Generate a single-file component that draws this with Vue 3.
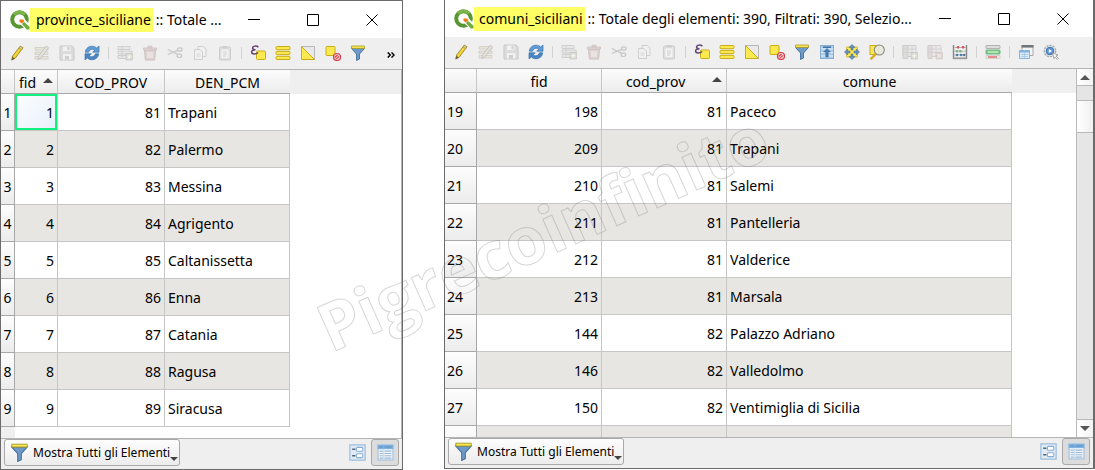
<script setup>
const dim = (s) => `<g opacity=".45">${s}</g>`
const yellowBox = 'fill="#fce94f" stroke="#c9ad18"'

const funnel =
  '<path d="M1.5 3.5 6.5 9v6.5l3-1.5V9l5-5.5z" fill="#6d9ac9" stroke="#436d9c" stroke-width=".9"/><path d="M1.5 1h13v2.4h-13z" fill="#fce94f" stroke="#a89a2c" stroke-width=".8"/>'

const icons = {
  pencil:
    '<path d="M11.3 1.2 14 2.800 6.200 13.200 2.800 15 3.600 11z" fill="#f0d438" stroke="#9c8526" stroke-width=".9"/><path d="m11.3 1.2 2.700 1.600-1.300 1.900-2.700-1.800z" fill="#d9d0a0" stroke="#9c8526" stroke-width=".6"/><path d="m3.400 11.700-.9 3.700 3.300-2z" fill="#675c3c"/>',
  multiedit: dim(
    '<path d="M1 2.5h13v2.6H1zM1 7h13v2.6H1zM1 11.5h13v2.6H1z" fill="#ddd7bb" stroke="#aaa596" stroke-width=".8"/><path d="m12.3 1 2.2 1.8-7.6 10-3 1.9.7-3.5z" fill="#d8d1c5" stroke="#888" stroke-width=".8"/>'
  ),
  save: dim(
    '<path d="M1 1h12l2 2v12H1z" fill="#c4c4c4" stroke="#9b9b9b"/><path d="M4 1.5h7.5V6H4zM4 9h8.5v5.5H4z" fill="#f4f4f4"/><path d="M8.5 2h2v3h-2zM6 11h4v3.5H6z" fill="#aaa"/>'
  ),
  reload:
    '<path d="M1.3 7.2C1.6 3.3 4.8 1.2 8 1.2c2 0 3.5.7 4.7 1.9L15 1v6.2H8.7l2-2.1C8.6 3.4 5.500 4.300 4.600 7.200z" fill="#5f9bd4" stroke="#3c74ad" stroke-width=".7"/><path d="M14.7 8.8c-.3 3.9-3.5 6-6.7 6-2 0-3.5-.7-4.7-1.9L1 15V8.8h6.3l-2 2.100c2.100 1.700 5.200.8 6.100-2.100z" fill="#4a86c2" stroke="#3c74ad" stroke-width=".7"/>',
  addrow: dim(
    '<path d="M1 1.5h12v3H1zM1 6h14v3H1zM1 10.5h9v3H1z" fill="#dedede" stroke="#a5a5a5" stroke-width=".9"/><path d="M5 1.5v12" stroke="#aaa"/><path d="M9 8.5h6.5V15H9z" fill="#bfbba8" stroke="#918e80" stroke-width=".6"/><path d="M12.2 9.3v5M9.7 11.8h5M10.5 10.1l3.5 3.5M14 10.1l-3.5 3.5" stroke="#fff" stroke-width=".8"/>'
  ),
  trash: dim(
    '<path d="M2.5 5h11l-.9 10H3.4z" fill="#cdb1b1" stroke="#a58a8a"/><path d="M1.5 3h13v2h-13zM6 1.2h4V3H6z" fill="#d6baba" stroke="#a58a8a" stroke-width=".8"/><path d="M6 7v6M8 7v6M10 7v6" stroke="#fff" stroke-width=".9"/>'
  ),
  cut: dim(
    '<path d="m.8 4.500 10 4.800M.8 9.500l10-4.200" fill="none" stroke="#999" stroke-width="1.300"/><ellipse cx="12.800" cy="4.500" rx="2.300" ry="1.700" fill="none" stroke="#999" stroke-width="1.200"/><ellipse cx="12.400" cy="10.800" rx="2.300" ry="1.700" fill="none" stroke="#999" stroke-width="1.200"/>'
  ),
  copy: dim(
    '<path d="M6 1.5h5.500L14 4v7.500H6z" fill="#f3f3f3" stroke="#aaa"/><path d="M2.500 4.500H8L10.500 7v7.500h-8z" fill="#f3f3f3" stroke="#aaa"/><path d="M4.500 9h4M4.500 11h4" stroke="#bbb"/>'
  ),
  paste: dim(
    '<rect x="2.500" y="2" width="11" height="13" rx="1" fill="#ccc" stroke="#a5a5a5"/><path d="M4.500 4.500h7v8.500h-7z" fill="#fafafa"/><path d="M5.500 1h5v2.500h-5z" fill="#aaa"/><path d="M6 7h4M6 9h4M6 11h3" stroke="#aaa"/>'
  ),
  expression:
    `<rect x="6.500" y="6" width="9" height="8.500" rx="1" ${yellowBox}/><path d="M8.400 2.300C6.500.3 2.500.9 2.600 3.100c0 1.300 1.300 1.700 2.900 1.700-2.300 0-3.900.7-3.900 2.300 0 2.500 4.600 2.500 6.500.4" fill="none" stroke="#654573" stroke-width="1.500"/>`,
  selectall:
    `<rect x="1" y="1.500" width="14" height="3.200" rx="1" ${yellowBox}/><rect x="1" y="6.400" width="14" height="3.200" rx="1" ${yellowBox}/><rect x="1" y="11.300" width="14" height="3.200" rx="1" ${yellowBox}/>`,
  invert:
    '<path d="M1.500 1.500h13v13z" fill="#e9e9e9" stroke="#b7b7b7"/><path d="M1.500 1.500v13h13z" fill="#fce94f" stroke="#c9ad18"/>',
  deselect:
    `<rect x="1" y="1.500" width="9" height="9" rx="1" ${yellowBox}/><circle cx="12" cy="12" r="3.500" fill="#f8d6d6" stroke="#d43c48" stroke-width="1.200"/><path d="m9.600 12.500 3-2.500m-2 4.300 3.500-3" stroke="#d43c48" stroke-width="1.100"/>`,
  funnel,
  movetop:
    '<rect x="1.500" y="1.500" width="13" height="13" fill="#a9cbe9" stroke="#86aed3"/><path d="M2 5h12M2 8.500h12M2 12h12" stroke="#e6f0fa"/><path d="M4 3.200h8" stroke="#36679a" stroke-width="1.400"/><path d="m8 4.500 3.500 3.500H9.200v5H6.800V8H4.500z" fill="#4b7eaf" stroke="#31618f" stroke-width=".5"/>',
  pan:
    '<path d="M2.500 3h11v10h-11z" fill="#fce94f" stroke="#c9ad18" stroke-width=".7"/><path d="M8 .5 11 3.500H9V6H7V3.500H5zM8 15.500l3-3H9V10H7v2.500H5zM.5 8l3-3v2H6v2H3.500v2zM15.500 8l-3-3v2H10v2h2.500v2z" fill="#6a90ba" stroke="#47709b" stroke-width=".6"/>',
  zoom:
    `<rect x="1" y="1.500" width="9" height="9" ${yellowBox}/><circle cx="10.300" cy="6" r="5" fill="#e9e8dc" fill-opacity=".92" stroke="#888" stroke-width="1.100"/><path d="M6.800 9.800 1.500 15.300" stroke="#d6ab24" stroke-width="2.400"/>`,
  addcol: dim(
    '<path d="M1 1.500h13v11H1z" fill="#e1e1e1" stroke="#aaa"/><path d="M1 1.500h5v13H1z" fill="#c6c6be" stroke="#a5a5a5"/><path d="M1 5h13M1 8.500h13M10 1.500v11" stroke="#b3b3b3"/><path d="M9 8.500h6.500V15H9z" fill="#bfbba8" stroke="#918e80" stroke-width=".6"/><path d="M12.200 9.300v5M9.700 11.800h5" stroke="#fff"/>'
  ),
  delcol: dim(
    '<path d="M1 1.500h13v11H1z" fill="#e4dfe1" stroke="#b5b0b2"/><path d="M1 1.500h4v13H1z" fill="#cbbfc3" stroke="#b0a3a7"/><path d="M1 5h13M1 8.500h13M9 1.500v11" stroke="#baaeb2"/><path d="M9 8.500h6.500V15H9z" fill="#cfb1b1" stroke="#a89090" stroke-width=".6"/><path d="m10.300 10 3.800 3.800m0-3.800-3.800 3.800" stroke="#fff"/>'
  ),
  abacus:
    '<path d="M1.500 1v14M14.500 1v14" stroke="#888" stroke-width="1.400"/><path d="M1 13.400h14v1.800H1z" fill="#999"/><path d="M2 3.500h12M2 7.200h12M2 10.900h12" stroke="#b5b5b5"/><g stroke-width="2.600" stroke-linecap="round"><path d="M6 3.300h.1M11 3.300h.1" stroke="#d95050"/><path d="M5 7.200h.1M8.300 7.200h.1" stroke="#77b886"/><path d="M5 11h.1M9 11h.1M12 11h.1" stroke="#547fa8"/></g>',
  conditional:
    '<rect x="1" y="1.500" width="14" height="3" rx=".5" fill="#ddd" stroke="#a5a5a5" stroke-width=".8"/><rect x="1" y="6" width="14" height="4" rx=".5" fill="#83d18e" stroke="#5da869" stroke-width=".8"/><path d="M3 8h10" stroke="#d5f5d8" stroke-width="1.200"/><rect x="1" y="11.500" width="14" height="3" fill="#f5e6e6" stroke="#ccc" stroke-width=".8"/><path d="M3 13h9" stroke="#d84444" stroke-width="1.100"/>',
  dock:
    '<path d="M4 1.500h11v10H4z" fill="#f4f4f4" stroke="#aaa"/><path d="M3.500 1h12v2.600h-12z" fill="#71777d"/><path d="M1.500 6.500h10v8h-10z" fill="#d9eaf8" stroke="#8bb4d9"/><path d="M1.500 6.500h10v2h-10z" fill="#82b3df"/><path d="M3 10.500h7M3 12.500h7M6.500 9v5" stroke="#a5c8e5" stroke-width=".8"/>',
  actions:
    '<circle cx="7" cy="7" r="5.700" fill="#e8ebee" stroke="#a0a7ae" stroke-width="1.300" stroke-dasharray="2.200 1"/><circle cx="7" cy="7" r="3.800" fill="#5e94cf" stroke="#3e72aa"/><path d="m5.800 5 3.300 2-3.300 2z" fill="#fff"/><path d="m9.500 9 5.500 2-2 .9 2.300 2.500-1 1-2.300-2.600-1 1.800z" fill="#fff" stroke="#888" stroke-width=".7"/>',
  form:
    '<rect x=".8" y=".8" width="14.400" height="14.400" fill="#dfeaf4" stroke="#a0c0df" stroke-width="1.200"/><path d="M3 5h3M3 11h3" stroke="#566575" stroke-width="1.300"/><rect x="7" y="3.200" width="6" height="3.600" rx="1" fill="#fff" stroke="#86add3"/><rect x="7" y="9.200" width="6" height="3.600" rx="1" fill="#fff" stroke="#86add3"/>',
  table:
    '<rect x="1" y="1" width="14" height="14" fill="#eef4fa" stroke="#a0c0df"/><path d="M.5.8h15v4H.5z" fill="#7fb2e0"/><path d="M2 2.800h3.500m1.500 0h7" stroke="#5289bd" stroke-width=".8"/><path d="M2.500 6.700h3m1.500 0h6.500M2.500 8.900h3m1.500 0h6.500M2.500 11.100h3m1.500 0h6.500M2.500 13.300h3m1.500 0h6.500" stroke="#9db9d5"/><path d="M6.200 5v10" stroke="#c8daeb" stroke-width=".8"/>'
}

const baseTools = [
  ['pencil', 'multiedit', 'save', 'reload'],
  ['addrow', 'trash', 'cut', 'copy', 'paste'],
  ['expression', 'selectall', 'invert', 'deselect', 'funnel']
]

const windows = [
  {
    id: 'province',
    layer: 'province_siciliane',
    title: ':: Totale ...',
    tools: baseTools,
    overflow: true,
    columns: [
      { name: 'fid', sorted: true },
      { name: 'COD_PROV' },
      { name: 'DEN_PCM' }
    ],
    rows: [
      [1, 1, 81, 'Trapani'],
      [2, 2, 82, 'Palermo'],
      [3, 3, 83, 'Messina'],
      [4, 4, 84, 'Agrigento'],
      [5, 5, 85, 'Caltanissetta'],
      [6, 6, 86, 'Enna'],
      [7, 7, 87, 'Catania'],
      [8, 8, 88, 'Ragusa'],
      [9, 9, 89, 'Siracusa']
    ]
  },
  {
    id: 'comuni',
    layer: 'comuni_siciliani',
    title: ':: Totale degli elementi: 390, Filtrati: 390, Selezio...',
    tools: [
      baseTools[0],
      baseTools[1],
      [...baseTools[2], 'movetop', 'pan', 'zoom'],
      ['addcol', 'delcol', 'abacus'],
      ['conditional'],
      ['dock', 'actions']
    ],
    scroll: true,
    columns: [
      { name: 'fid' },
      { name: 'cod_prov', sorted: true },
      { name: 'comune' }
    ],
    rows: [
      [19, 198, 81, 'Paceco'],
      [20, 209, 81, 'Trapani'],
      [21, 210, 81, 'Salemi'],
      [22, 211, 81, 'Pantelleria'],
      [23, 212, 81, 'Valderice'],
      [24, 213, 81, 'Marsala'],
      [25, 144, 82, 'Palazzo Adriano'],
      [26, 146, 82, 'Valledolmo'],
      [27, 150, 82, 'Ventimiglia di Sicilia'],
      ['', '', '', '']
    ]
  }
]
</script>

<template>
  <main class="desktop">
    <section v-for="w in windows" :key="w.id" class="window" :class="w.id">
      <header class="titlebar">
        <svg class="logo" viewBox="0 0 20 20" aria-hidden="true">
          <circle cx="9.500" cy="9.500" r="7.300" fill="none" stroke="#589632" stroke-width="4" />
          <path d="M4 4.500a7.300 7.300 0 0 1 11 0" fill="none" stroke="#7db548" stroke-width="3" />
          <path d="M9 9h5.500l5.500 6v4.500h-4.200L9 13z" fill="#fff" />
          <path d="M12 14 14 11.800l5.500 5V19.500h-2.800z" fill="#6fae3e" />
          <path d="M9.500 9.500h3.600l1.300 1.500-2.700 2.600-2.200-1.800z" fill="#ee7913" />
        </svg>
        <h1><mark>{{ w.layer }}</mark><span>{{ w.title }}</span></h1>
        <div class="controls">
          <button type="button" aria-label="Riduci a icona">
            <svg viewBox="0 0 12 12"><path d="M0 5.500h12" /></svg>
          </button>
          <button type="button" aria-label="Ingrandisci">
            <svg viewBox="0 0 12 12"><path d="M.5.5h11v11H.5z" /></svg>
          </button>
          <button type="button" aria-label="Chiudi">
            <svg viewBox="0 0 12 12"><path d="m.5.5 11 11m0-11-11 11" /></svg>
          </button>
        </div>
      </header>

      <div class="toolbar" role="toolbar">
        <div v-for="(group, g) in w.tools" :key="g" class="group">
          <button v-for="t in group" :key="t" type="button" class="tool" :aria-label="t">
            <svg viewBox="0 0 16 16" v-html="icons[t]"></svg>
          </button>
        </div>
        <button v-if="w.overflow" type="button" class="more" aria-label="Altri strumenti">
          <svg viewBox="0 0 8 6"><path d="m.7.4 2.600 2.600L.7 5.600M4.500.4l2.600 2.600-2.600 2.600" /></svg>
        </button>
      </div>

      <div class="view">
        <div class="grid">
          <table>
            <colgroup>
              <col class="c-num" /><col class="c-fid" /><col class="c-cod" /><col class="c-name" /><col />
            </colgroup>
            <thead>
              <tr>
                <td class="corner"></td>
                <th v-for="c in w.columns" :key="c.name" scope="col" :class="{ sorted: c.sorted }">
                  {{ c.name }}
                  <svg v-if="c.sorted" class="arrow" viewBox="0 0 10 5"><path d="M5 0l5 5H0z" /></svg>
                </th>
                <td class="rest"></td>
              </tr>
            </thead>
            <tbody>
              <tr v-for="(r, i) in w.rows" :key="i">
                <th scope="row">{{ r[0] }}</th>
                <td class="num" :class="{ current: w.id === 'province' && i === 0 }">{{ r[1] }}</td>
                <td class="num">{{ r[2] }}</td>
                <td class="name">{{ r[3] }}</td>
                <td class="blank"></td>
              </tr>
            </tbody>
          </table>
          <div class="stub"></div>
        </div>
        <div v-if="w.scroll" class="scroll">
          <button type="button" aria-label="Scorri su"><svg viewBox="0 0 10 5"><path d="M5 0l5 5H0z" /></svg></button>
          <div class="before"></div>
          <div class="thumb"></div>
          <div class="track"></div>
          <button type="button" aria-label="Scorri giù"><svg viewBox="0 0 10 5"><path d="M0 0h10L5 5z" /></svg></button>
        </div>
      </div>

      <footer class="statusbar">
        <button type="button" class="filter">
          <svg class="funnel" viewBox="0 0 16 16" v-html="icons.funnel"></svg>
          <span>Mostra Tutti gli Elementi</span>
          <svg class="drop" viewBox="0 0 8 4"><path d="M0 0h8L4 4z" /></svg>
        </button>
        <div class="modes">
          <button type="button" class="mode" aria-label="Vista modulo">
            <svg viewBox="0 0 16 16" v-html="icons.form"></svg>
          </button>
          <button type="button" class="mode on" aria-label="Vista tabella" aria-pressed="true">
            <svg viewBox="0 0 16 16" v-html="icons.table"></svg>
          </button>
        </div>
      </footer>
    </section>

    <svg class="watermark" viewBox="0 0 1095 470" aria-hidden="true">
      <text x="331" y="353" transform="rotate(-24 331 353)">Pigrecoinfinito</text>
    </svg>
  </main>
</template>

<style>
body {
  background: #fff;
}
</style>

<style scoped>
* {
  box-sizing: border-box;
}
.desktop {
  position: relative;
  display: flex;
  gap: 41px;
  height: 100vh;
  min-height: 240px;
  overflow: hidden;
  color: #000;
  font-family: "Noto Sans", "Open Sans", sans-serif;
  font-size: 14px;
}
button {
  margin: 0;
  padding: 0;
  border: 0;
  background: none;
  color: inherit;
  font: inherit;
}
svg {
  display: block;
  flex: none;
}
.window {
  display: flex;
  flex-direction: column;
  min-width: 0;
  border: 1px solid #6b6b6b;
  background: #fff;
}
.province {
  flex: 403 1 0;
}
.comuni {
  flex: 651 1 0;
  margin-bottom: 1px;
  border-top: 0;
  border-right-width: 2px;
}
.titlebar {
  display: flex;
  flex: none;
  align-items: center;
  height: 37px;
  padding-left: 9px;
}
.logo {
  width: 20px;
  height: 20px;
}
h1 {
  display: flex;
  flex: 1;
  align-items: center;
  gap: 3px;
  min-width: 0;
  margin: 0;
  font-size: 14px;
  font-weight: 400;
  line-height: 24px;
  white-space: nowrap;
}
mark {
  padding: 0 2px 0 6px;
  background: #ffff66;
  color: inherit;
}
.comuni mark {
  padding-left: 5px;
}
.controls {
  display: flex;
  padding-right: 1px;
}
.controls button {
  display: grid;
  place-items: center;
  width: 59px;
  height: 36px;
}
.controls svg {
  width: 12px;
  height: 12px;
  fill: none;
  stroke: #000;
}
.toolbar {
  display: flex;
  flex: none;
  align-items: flex-start;
  height: 31px;
  padding: 3px 4px 0 3px;
  background: #efefef;
}
.group {
  display: flex;
}
.group + .group {
  padding-left: 8px;
  background: linear-gradient(#d2d2d2, #d2d2d2) 4px 50% / 1px 12px no-repeat;
}
.tool {
  display: grid;
  place-items: center;
  width: 25px;
  height: 24px;
}
.tool svg {
  width: 16px;
  height: 16px;
}
.more {
  align-self: center;
  margin-left: auto;
  padding: 4px 3px;
}
.more svg {
  width: 8px;
  height: 6px;
  fill: none;
  stroke: #000;
  stroke-width: 1.4;
}
.view {
  display: flex;
  flex: 1;
  min-height: 0;
  border-top: 1px solid #b4b4b4;
  border-bottom: 1px solid #b4b4b4;
}
.province .view {
  border-right: 1px solid #b4b4b4;
}
.grid {
  display: flex;
  flex: 1;
  flex-direction: column;
  min-width: 0;
  overflow: hidden;
}
table {
  width: 100%;
  table-layout: fixed;
  border-spacing: 0;
}
.c-num {
  width: 14px;
}
.c-fid {
  width: 43px;
}
.c-cod {
  width: 107px;
}
.c-name {
  width: 125px;
}
.comuni .c-num {
  width: 32px;
}
.comuni .c-fid,
.comuni .c-cod {
  width: 125px;
}
.comuni .c-name {
  width: 285px;
}
th,
td {
  overflow: hidden;
  padding: 0;
  font-weight: 400;
  white-space: nowrap;
}
thead th,
thead td {
  position: relative;
  height: 24px;
  border-right: 1px solid #c6c6c6;
  border-bottom: 1px solid #a8a8a8;
  background: linear-gradient(#fcfcfc, #ececec);
  line-height: 20px;
  text-align: center;
}
thead th {
  padding-top: 2px;
}
thead th:nth-child(4) {
  border-right: 0;
}
thead .rest {
  border: 0;
  background: #efefef;
}
.sorted {
  padding-right: 17px;
}
.arrow {
  position: absolute;
  top: 8px;
  right: 4px;
  width: 10px;
  height: 5px;
  fill: #444;
}
tbody th,
tbody td {
  height: 37px;
  border-right: 1px solid #c6c6c6;
  border-bottom: 1px solid #c6c6c6;
}
tbody th {
  border-color: #a8a8a8;
  background: linear-gradient(#fdfdfd, #ececec);
}
.comuni tbody th {
  padding-left: 2px;
  text-align: left;
}
tbody tr:nth-child(even) td {
  background: #e7e6e2;
}
tbody td.blank,
tbody tr:nth-child(even) td.blank {
  border: 0;
  background: #fff;
}
.num {
  padding-right: 3px;
  text-align: right;
}
.name {
  padding-left: 3px;
}
.current {
  background: linear-gradient(135deg, #fdfeff, #e6f0fb);
  box-shadow: inset 0 0 0 2px #12f07f;
}
.stub {
  flex: 1;
  width: 14px;
  background: #efefef;
}
.scroll {
  display: flex;
  flex: none;
  flex-direction: column;
  width: 17px;
  border-left: 1px solid #b9b9b9;
}
.scroll button {
  display: grid;
  place-items: center;
  height: 16px;
  background: linear-gradient(90deg, #fff, #f3f3f3);
}
.scroll button:last-child {
  height: 18px;
  border-top: 1px solid #b9b9b9;
}
.scroll svg {
  width: 10px;
  height: 5px;
  fill: #555;
}
.before {
  height: 15px;
  border-top: 1px solid #b9b9b9;
  background: #e5e5e5;
}
.thumb {
  height: 33px;
  border: solid #b9b9b9;
  border-width: 1px 0;
  background: linear-gradient(90deg, #fff, #f0f0f0);
}
.track {
  flex: 1;
  background: #e6e6e6;
}
.statusbar {
  display: flex;
  flex: none;
  align-items: flex-start;
  justify-content: space-between;
  height: 30px;
  padding: 0 3px;
  background: #efefef;
}
.filter {
  display: flex;
  align-items: center;
  height: 27px;
  padding: 0 1px 0 5px;
  border: 1px solid #a9a9a9;
  border-radius: 3px;
  background: linear-gradient(#fdfdfd, #ececec);
  font-size: 12px;
}
.funnel {
  width: 19px;
  height: 19px;
  margin-right: 4px;
}
.drop {
  align-self: flex-end;
  width: 8px;
  height: 4px;
  margin-bottom: 4px;
  fill: #444;
}
.modes {
  display: flex;
}
.mode {
  display: grid;
  place-items: center;
  width: 28px;
  height: 27px;
  border: 1px solid transparent;
  border-radius: 3px;
}
.mode.on {
  border-color: #a9a9a9;
  background: #dcdcdc;
}
.mode svg {
  width: 17px;
  height: 17px;
}
.watermark {
  position: absolute;
  top: 0;
  left: 0;
  width: 100%;
  pointer-events: none;
}
.watermark text {
  fill: none;
  stroke: #777;
  stroke-opacity: 0.3;
  font-family: "Open Sans", "Noto Sans", sans-serif;
  font-size: 66px;
  font-weight: 700;
  font-variant-ligatures: none;
}
</style>
